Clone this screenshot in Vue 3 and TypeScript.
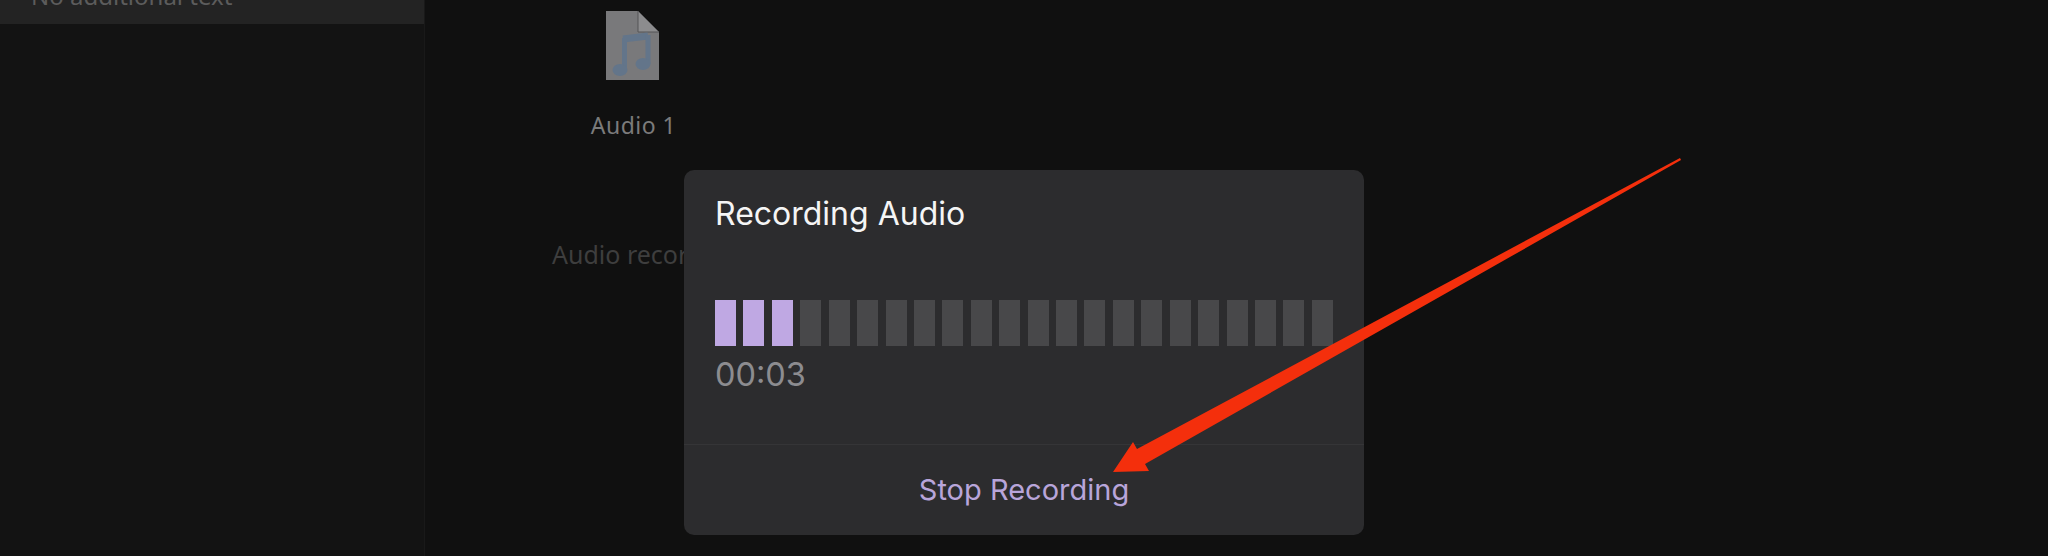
<script setup lang="ts">
const total = 22
const active = 3
const bars = Array.from({ length: total }, (_, i) => i < active)
</script>

<template>
  <div class="screen">
    <aside class="sidebar">
      <div class="row"><span class="row-text">No additional text</span></div>
    </aside>
    <main class="content">
      <div class="tile">
        <svg class="file" viewBox="0 0 53 69" width="53" height="69" aria-hidden="true">
          <path d="M0 0H32L53 21V69H0Z" fill="#79797b" />
          <path d="M32 0L53 21H32Z" fill="#8c8c8e" stroke="#555557" stroke-width="1" />
          <path d="M17 28L42 25" fill="none" stroke="#63758a" stroke-width="7" />
          <path d="M18.5 27V59M42 24V53" fill="none" stroke="#63758a" stroke-width="5" />
          <ellipse cx="14" cy="59" rx="7.5" ry="6" fill="#63758a" />
          <ellipse cx="37" cy="53" rx="7.5" ry="6" fill="#63758a" />
        </svg>
        <span class="tile-label">Audio 1</span>
      </div>
      <p class="hint">Audio recordings</p>
    </main>

    <section class="dialog">
      <h2 class="title">Recording Audio</h2>
      <div class="meter">
        <span v-for="(on, i) in bars" :key="i" class="bar" :class="{ on }"></span>
      </div>
      <div class="time">00:03</div>
      <div class="action">Stop Recording</div>
    </section>

    <svg class="arrow" viewBox="0 0 2048 556" width="2048" height="556" aria-hidden="true">
      <path d="M1680 158L1681 160L1145 464L1149 471L1113 472L1133 442L1137 449Z" fill="#f42f0c" />
    </svg>
  </div>
</template>

<style>
html, body { margin: 0; background: #101010; }
</style>

<style scoped>
.screen {
  position: relative;
  width: 2048px;
  height: 556px;
  overflow: hidden;
  display: flex;
  background: #101010;
  font-family: "Inter", "Liberation Sans", sans-serif;
}
.sidebar {
  width: 424px;
  flex: none;
  background: #131313;
  border-right: 1px solid #191919;
}
.row {
  height: 24px;
  background: #232323;
  color: #5c5c5c;
  font-family: "Noto Sans", sans-serif;
  font-size: 24px;
  line-height: 0;
  padding-left: 31px;
  box-sizing: border-box;
  overflow: hidden;
}
.row-text {
  display: block;
  margin-top: -4px;
}
.content {
  flex: 1;
  padding: 11px 0 0 127px;
  font-family: "Noto Sans", sans-serif;
}
.tile {
  width: 160px;
  display: flex;
  flex-direction: column;
  align-items: center;
}
.file { display: block; }
.tile-label {
  margin-top: 31px;
  margin-left: 3px;
  color: #7b7b7b;
  font-size: 23px;
  letter-spacing: 0.5px;
  line-height: 28px;
}
.hint {
  margin: 98px 0 0;
  color: #3e3e3e;
  font-size: 25px;
  line-height: 34px;
}
.dialog {
  position: absolute;
  left: 684px;
  top: 170px;
  width: 680px;
  height: 365px;
  box-sizing: border-box;
  display: flex;
  flex-direction: column;
  background: #2c2c2e;
  border-radius: 10px;
  padding: 0 31px;
}
.title {
  margin: 23px 0 0;
  color: #f5f5f5;
  font-size: 32px;
  font-weight: 400;
  line-height: 42px;
}
.meter {
  margin-top: 65px;
  display: flex;
  gap: 7.43px;
  height: 46px;
}
.bar {
  width: 21px;
  flex: none;
  background: #48484a;
}
.bar.on { background: #bfa8e3; }
.time {
  margin-top: 8px;
  color: #8c8c90;
  font-size: 32.5px;
  line-height: 42px;
}
.action {
  margin: 48px -31px 0;
  border-top: 1px solid #353537;
  padding-top: 25px;
  text-align: center;
  color: #b8a5da;
  font-size: 29px;
  line-height: 40px;
}
.arrow {
  position: absolute;
  left: 0;
  top: 0;
  pointer-events: none;
}
</style>
